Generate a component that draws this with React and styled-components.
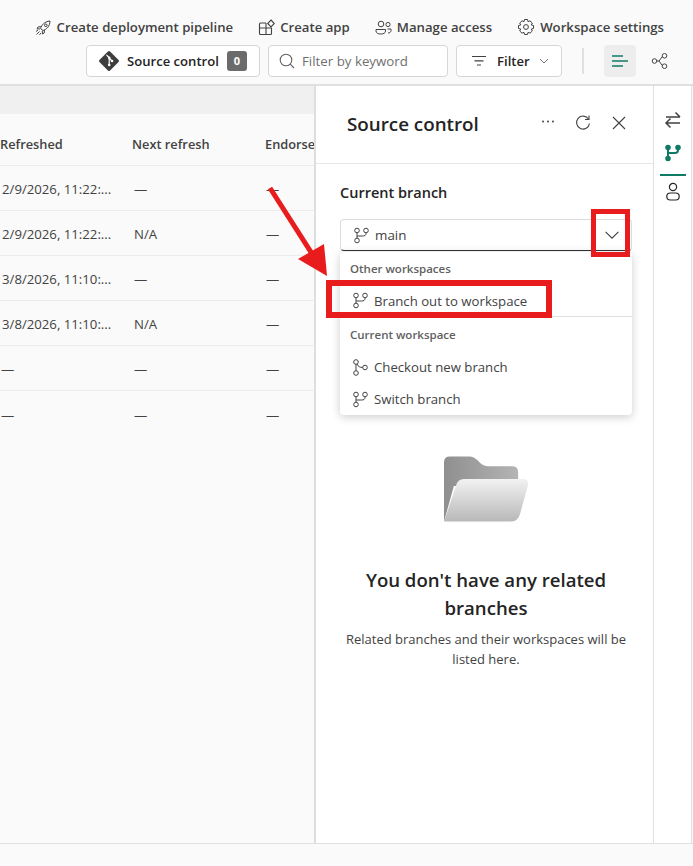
import styled, { createGlobalStyle } from 'styled-components'

const Global = createGlobalStyle`
  html, body { margin: 0; padding: 0; background: #fafafa; }
  * { box-sizing: border-box; }
`

const Page = styled.div`
  position: relative;
  width: 693px;
  height: 866px;
  overflow: hidden;
  display: flex;
  flex-direction: column;
  background: #fafafa;
  color: #242424;
  font-family: "Open Sans", "Noto Sans", "Liberation Sans", sans-serif;
  font-size: 13px;
`

const Header = styled.header`
  height: 86px;
  flex: none;
  display: flex;
  flex-direction: column;
  border-bottom: 2px solid #e0e0e0;
`

const TopRow = styled.div`
  display: flex;
  justify-content: flex-end;
  gap: 25px;
  height: 45px;
  padding: 17px 29px 0 0;
`

const TopLink = styled.div`
  display: flex;
  align-items: center;
  gap: 5px;
  height: 20px;
  color: #424242;
  font-weight: 600;
  font-size: 13.2px;
  white-space: nowrap;
  svg { flex: none; }
`

const ToolRow = styled.div`
  display: flex;
  align-items: center;
  height: 32px;
  padding-left: 86px;
`

const ToolButton = styled.div`
  display: flex;
  align-items: center;
  height: 32px;
  width: ${p => p.$w}px;
  margin-right: ${p => p.$mr || 0}px;
  padding-left: ${p => p.$pl || 0}px;
  background: #fff;
  border: 1px solid #d6d6d6;
  border-radius: 4px;
  font-weight: 600;
  font-size: 13.1px;
  white-space: nowrap;
`

const ButtonLabel = styled.span`
  margin: 0 ${p => p.$right || 0}px 0 ${p => p.$left || 0}px;
`

const Badge = styled.span`
  width: 20px;
  height: 20px;
  margin-left: 8px;
  border-radius: 3px;
  background: #6b6b6b;
  color: #fff;
  font-size: 11px;
  font-weight: 700;
  text-align: center;
  line-height: 20px;
`

const Placeholder = styled.span`
  color: #707070;
  font-weight: 400;
  margin-left: 6px;
  font-size: 13.3px;
`

const ToolDivider = styled.div`
  width: 2px;
  height: 26px;
  margin: 0 20px 0 20px;
  background: #e0e0e0;
`

const ViewButton = styled.div`
  width: 32px;
  height: 32px;
  margin-right: 8px;
  display: flex;
  align-items: center;
  justify-content: center;
  border-radius: 4px;
  background: ${p => (p.$on ? '#ededed' : 'transparent')};
`

const Main = styled.main`
  flex: 1;
  min-height: 0;
  display: flex;
`

const Table = styled.section`
  width: 314px;
  flex: none;
  overflow: hidden;
`

const Band = styled.div`
  height: 28px;
  background: #f0f0f0;
`

const Row = styled.div`
  display: grid;
  grid-template-columns: 132px 133px 60px;
  align-items: center;
  height: ${p => (p.$head ? 52 : 45)}px;
  padding-top: ${p => (p.$head ? 8 : 2)}px;
  border-bottom: 1px solid #ececec;
  white-space: nowrap;
  font-size: 13.2px;
  color: #424242;
  &:last-child { border-bottom: none; }
`

const HeadCell = styled.div`
  font-weight: 600;
  font-size: 12.8px;
  overflow: hidden;
`

const Cell = styled.div`
  padding-left: ${p => p.$pad}px;
`

const Panel = styled.section`
  width: 340px;
  flex: none;
  background: #fff;
  border-left: 2px solid #dedede;
  border-right: 1px solid #e0e0e0;
  display: flex;
  flex-direction: column;
`

const PanelHead = styled.div`
  height: 78px;
  flex: none;
  display: flex;
  align-items: center;
  padding: 0 25px 2px 31px;
  border-bottom: 1px solid #e6e6e6;
`

const PanelTitle = styled.h2`
  margin: 0;
  flex: 1;
  font-size: 18.8px;
  font-weight: 600;
`

const PanelActions = styled.div`
  display: flex;
  align-items: center;
  gap: 18px;
  margin-bottom: 2px;
`

const PanelBody = styled.div`
  padding: 18px 21px 0 24px;
  display: flex;
  flex-direction: column;
`

const BranchLabel = styled.div`
  font-size: 14.5px;
  font-weight: 600;
  height: 22px;
  line-height: 22px;
  margin-bottom: 15px;
`

const Select = styled.div`
  height: 32px;
  display: flex;
  align-items: center;
  padding: 0 11px 0 12px;
  border: 1px solid #dcdcdc;
  border-bottom: 1.5px solid #333;
  border-radius: 4px;
  gap: 5px;
  font-size: 13.4px;
  color: #424242;
  span { flex: 1; }
`

const Menu = styled.div`
  height: 163px;
  margin-top: 1px;
  background: #fff;
  border-radius: 4px;
  box-shadow: 0 2px 10px rgba(0, 0, 0, 0.2);
  display: flex;
  flex-direction: column;
`

const MenuGroup = styled.div`
  font-size: 11.5px;
  font-weight: 600;
  color: #616161;
  padding-left: 10px;
  height: ${p => p.$h}px;
  line-height: 1;
  padding-top: ${p => p.$top}px;
`

const MenuItem = styled.div`
  height: 32px;
  flex: none;
  display: flex;
  align-items: center;
  gap: 5px;
  padding-left: 12px;
  font-size: 13.2px;
  color: #424242;
  border-bottom: ${p => (p.$line ? '1px solid #e0e0e0' : 'none')};
`

const Empty = styled.div`
  display: flex;
  flex-direction: column;
  align-items: center;
  text-align: center;
  margin-top: 41px;
`

const EmptyTitle = styled.h3`
  margin: 44px 0 0;
  font-size: 18.6px;
  font-weight: 600;
  line-height: 28px;
  width: 270px;
`

const EmptyText = styled.p`
  margin: 7px 0 0;
  font-size: 13px;
  line-height: 20px;
  color: #424242;
  width: 290px;
`

const Rail = styled.aside`
  width: 38px;
  flex: none;
  background: #fff;
  border-right: 1px solid #e0e0e0;
  display: flex;
  flex-direction: column;
  align-items: center;
  padding-top: 25px;
`

const RailTab = styled.div`
  width: 26px;
  height: ${p => p.$h}px;
  padding-top: ${p => p.$top || 0}px;
  display: flex;
  justify-content: center;
  align-items: flex-start;
  border-bottom: ${p => (p.$on ? '2px solid #0f7b66' : 'none')};
`

const Footer = styled.footer`
  height: 23px;
  flex: none;
  background: #fafafa;
  border-top: 1px solid #e0e0e0;
`

const Overlay = styled.svg`
  position: absolute;
  left: 0;
  top: 0;
  pointer-events: none;
`

const Rocket = () => (
  <svg width="17" height="17" viewBox="0 0 17 17" fill="none" stroke="#424242" strokeWidth="1">
    <path d="M5.5 9.5 C6.5 6 9.5 2.5 15 2 C15 7 11.500 10.500 8 11.500 Z" />
    <circle cx="10.800" cy="6.300" r="1.300" />
    <path d="M5.800 7.500 L3 8 L2 9.800 L5 10 M9.500 11 L9.200 14 L7.500 15 L7.200 12" />
    <path d="M1.500 15.500 L4.500 12.500 M1 12.500 L3 11 M4.500 15.800 L6 14" />
  </svg>
)

const AppIcon = () => (
  <svg width="17" height="17" viewBox="0 0 17 17" fill="none" stroke="#424242" strokeWidth="1.100">
    <path d="M8 4 H2.500 A1 1 0 0 0 1.500 5 V14.500 A1 1 0 0 0 2.500 15.500 H12.500 A1 1 0 0 0 13.500 14.500 V9 H1.500 M8 4 V15.500" />
    <path d="M13 1 L16.300 4.500 L13 8 L9.700 4.500 Z" />
  </svg>
)

const People = ({ color = '#424242' }) => (
  <svg width="17" height="17" viewBox="0 0 17 17" fill="none" stroke={color} strokeWidth="1">
    <circle cx="6" cy="5" r="2.800" />
    <circle cx="13" cy="5.500" r="2.100" />
    <path d="M1 10.500 H10.500 V12 C10.500 14 8.500 15 5.700 15 C3 15 1 14 1 12 Z" />
    <path d="M12.500 10 H16 V11.500 C16 13.200 14.700 14 13 14" />
  </svg>
)

const Gear = () => (
  <svg width="18" height="18" viewBox="0 0 18 18" fill="none" stroke="#424242" strokeWidth="1">
    <circle cx="9" cy="9" r="2.400" />
    <path d="M7.500 1.500 H10.500 L11 3.700 L13 2.800 L15.300 5 L14.300 7 L16.500 7.500 V10.500 L14.300 11 L15.300 13 L13 15.200 L11 14.300 L10.500 16.500 H7.500 L7 14.300 L5 15.200 L2.700 13 L3.700 11 L1.500 10.500 V7.500 L3.700 7 L2.700 5 L5 2.800 L7 3.700 Z" strokeLinejoin="round" />
  </svg>
)

const GitLogo = () => (
  <svg width="22" height="22" viewBox="0 0 22 22">
    <rect x="3.500" y="3.500" width="15" height="15" rx="1.500" fill="#3d3d3d" transform="rotate(45 11 11)" />
    <path d="M8.500 5 L11.200 7.700 V15 M11.200 8 L14 11" stroke="#fff" strokeWidth="1.200" fill="none" />
    <circle cx="11.200" cy="7.800" r="1.300" fill="#fff" />
    <circle cx="11.200" cy="15" r="1.300" fill="#fff" />
    <circle cx="14" cy="11" r="1.300" fill="#fff" />
  </svg>
)

const Search = () => (
  <svg width="18" height="18" viewBox="0 0 18 18" fill="none" stroke="#616161" strokeWidth="1.100">
    <circle cx="8" cy="8" r="5.800" />
    <path d="M12.200 12.200 L16 16" />
  </svg>
)

const FilterIcon = () => (
  <svg width="16" height="12" viewBox="0 0 16 12" stroke="#424242" strokeWidth="1.200">
    <path d="M1 1.500 H15 M3.500 5.800 H12.500 M6 10 H10" />
  </svg>
)

const Chevron = ({ size = 10, color = '#616161' }) => (
  <svg width={size} height={size} viewBox="0 0 10 10" fill="none" stroke={color} strokeWidth={size > 10 ? 0.7 : 0.9}>
    <path d="M1 3 L5 7 L9 3" />
  </svg>
)

const ListIcon = () => (
  <svg width="16" height="14" viewBox="0 0 16 14" stroke="#0f7b66" strokeWidth="1.500">
    <path d="M0 2 H11 M0 7 H16 M0 12 H11" />
  </svg>
)

const GraphIcon = () => (
  <svg width="18" height="18" viewBox="0 0 18 18" fill="none" stroke="#424242" strokeWidth="1">
    <circle cx="3.500" cy="9" r="2.300" />
    <circle cx="13.500" cy="3.800" r="2.300" />
    <circle cx="13.500" cy="14.200" r="2.300" />
    <path d="M5.800 9 H8 L11.300 4.500 M8 9 L11.300 13.500" />
  </svg>
)

const Dots = () => (
  <svg width="16" height="16" viewBox="0 0 16 16" fill="#424242">
    <circle cx="3" cy="6.500" r="1" />
    <circle cx="8" cy="6.500" r="1" />
    <circle cx="13" cy="6.500" r="1" />
  </svg>
)

const Refresh = () => (
  <svg width="18" height="18" viewBox="0 0 18 18" fill="none" stroke="#424242" strokeWidth="1.100">
    <path d="M14.500 5 A6.500 6.500 0 1 0 15.500 9.500" />
    <path d="M15 1.500 V5.500 H11" />
  </svg>
)

const Close = () => (
  <svg width="18" height="18" viewBox="0 0 18 18" stroke="#424242" strokeWidth="1.100">
    <path d="M3 3 L15 15 M15 3 L3 15" />
  </svg>
)

const Branch = () => (
  <svg width="17" height="17" viewBox="0 0 17 17" fill="none" stroke="#424242" strokeWidth="1">
    <circle cx="4" cy="3.500" r="2.300" />
    <circle cx="4" cy="13.500" r="2.300" />
    <circle cx="13" cy="3.500" r="2.300" />
    <path d="M4 5.800 V11.200 M13 5.800 V6.500 C13 8.500 11.500 9 9.500 9 H4" />
  </svg>
)

const CheckoutIcon = () => (
  <svg width="17" height="17" viewBox="0 0 17 17" fill="none" stroke="#424242" strokeWidth="1">
    <circle cx="4" cy="3" r="2.300" />
    <circle cx="4" cy="14" r="2.300" />
    <circle cx="13" cy="8.500" r="2.300" />
    <path d="M4 5.300 V11.700 M5 5 C6 7.500 8 8.500 10.700 8.500" />
  </svg>
)

const Swap = () => (
  <svg width="18" height="18" viewBox="0 0 18 18" fill="none" stroke="#424242" strokeWidth="1.500">
    <path d="M2 6 H16 M11.500 1.500 L16 6 M16 12 H2 M6.500 7.500 L2 12 L6.500 16.500" />
  </svg>
)

const BranchActive = () => (
  <svg width="18" height="18" viewBox="0 0 18 18" fill="#0f7b66" stroke="#0f7b66" strokeWidth="2">
    <circle cx="4" cy="3.500" r="1.800" />
    <circle cx="4" cy="14.500" r="1.800" />
    <circle cx="14" cy="3.500" r="1.800" />
    <path d="M4 4 V14 M14 4 V6 C14 8 13 9 11 9 H4" fill="none" />
  </svg>
)

const Person = () => (
  <svg width="18" height="20" viewBox="0 0 18 20" fill="none" stroke="#242424" strokeWidth="1.200">
    <circle cx="9" cy="5" r="3.600" />
    <rect x="2.800" y="11" width="12.400" height="7" rx="3.500" />
  </svg>
)

const FolderArt = () => (
  <svg width="85" height="66" viewBox="0 0 86 66">
    <defs>
      <linearGradient id="back" x1="0" y1="0" x2="1" y2="0">
        <stop offset="0" stopColor="#8f8f8f" />
        <stop offset="1" stopColor="#b4b4b4" />
      </linearGradient>
      <linearGradient id="front" x1="0" y1="0" x2="0" y2="1">
        <stop offset="0" stopColor="#f2f2f2" />
        <stop offset="1" stopColor="#b8b8b8" />
      </linearGradient>
    </defs>
    <path d="M0 6 Q0 0 6 0 H26 Q30 0 34 4 Q39 10 44 10 H69 Q75 10 75 16 V30 H10 L0 66 Z" fill="url(#back)" />
    <path d="M0 66 L12 30 Q14 23 20 23 H80 Q86 23 85 29 L77 58 Q75 66 67 66 Z" fill="url(#front)" />
  </svg>
)

const rows = [
  ['2/9/2026, 11:22:...', '—', '—'],
  ['2/9/2026, 11:22:...', 'N/A', '—'],
  ['3/8/2026, 11:10:...', '—', '—'],
  ['3/8/2026, 11:10:...', 'N/A', '—'],
  ['—', '—', '—'],
  ['—', '—', '—'],
]

export default function App() {
  return (
    <Page>
      <Global />
      <Header>
        <TopRow>
          <TopLink><Rocket />Create deployment pipeline</TopLink>
          <TopLink><AppIcon />Create app</TopLink>
          <TopLink><People />Manage access</TopLink>
          <TopLink><Gear />Workspace settings</TopLink>
        </TopRow>
        <ToolRow>
          <ToolButton $w={174} $mr={8} $pl={11}>
            <GitLogo />
            <ButtonLabel $left={7}>Source control</ButtonLabel>
            <Badge>0</Badge>
          </ToolButton>
          <ToolButton $w={180} $mr={8} $pl={9}>
            <Search />
            <Placeholder>Filter by keyword</Placeholder>
          </ToolButton>
          <ToolButton $w={106} $pl={14}>
            <FilterIcon />
            <ButtonLabel $left={10} $right={9}>Filter</ButtonLabel>
            <Chevron />
          </ToolButton>
          <ToolDivider />
          <ViewButton $on><ListIcon /></ViewButton>
          <ViewButton><GraphIcon /></ViewButton>
        </ToolRow>
      </Header>
      <Main>
        <Table>
          <Band />
          <Row $head>
            <HeadCell>Refreshed</HeadCell>
            <HeadCell>Next refresh</HeadCell>
            <HeadCell>Endorsement</HeadCell>
          </Row>
          {rows.map((r, i) => (
            <Row key={i}>
              <Cell $pad={r[0] === '—' ? 1 : 2}>{r[0]}</Cell>
              <Cell $pad={2}>{r[1]}</Cell>
              <Cell $pad={1}>{r[2]}</Cell>
            </Row>
          ))}
        </Table>
        <Panel>
          <PanelHead>
            <PanelTitle>Source control</PanelTitle>
            <PanelActions>
              <Dots />
              <Refresh />
              <Close />
            </PanelActions>
          </PanelHead>
          <PanelBody>
            <BranchLabel>Current branch</BranchLabel>
            <Select>
              <Branch />
              <span>main</span>
              <Chevron size={16} color="#424242" />
            </Select>
            <Menu>
              <MenuGroup $h={33} $top={11}>Other workspaces</MenuGroup>
              <MenuItem $line><Branch />Branch out to workspace</MenuItem>
              <MenuGroup $h={34} $top={12}>Current workspace</MenuGroup>
              <MenuItem><CheckoutIcon />Checkout new branch</MenuItem>
              <MenuItem><Branch />Switch branch</MenuItem>
            </Menu>
            <Empty>
              <FolderArt />
              <EmptyTitle>You don't have any related branches</EmptyTitle>
              <EmptyText>Related branches and their workspaces will be listed here.</EmptyText>
            </Empty>
          </PanelBody>
        </Panel>
        <Rail>
          <RailTab $h={33}><Swap /></RailTab>
          <RailTab $h={32} $on><BranchActive /></RailTab>
          <RailTab $h={30} $top={6}><Person /></RailTab>
        </Rail>
      </Main>
      <Footer />
      <Overlay width="693" height="866" viewBox="0 0 693 866">
        <g fill="none" stroke="#e81c1c">
          <rect x="593.500" y="211.500" width="34" height="43" strokeWidth="5" />
          <rect x="329" y="283" width="220" height="32" strokeWidth="6" />
          <path d="M270 188 L316 260" strokeWidth="5" />
        </g>
        <path d="M327 276 L298 259 L324 244 Z" fill="#e81c1c" />
      </Overlay>
    </Page>
  )
}
